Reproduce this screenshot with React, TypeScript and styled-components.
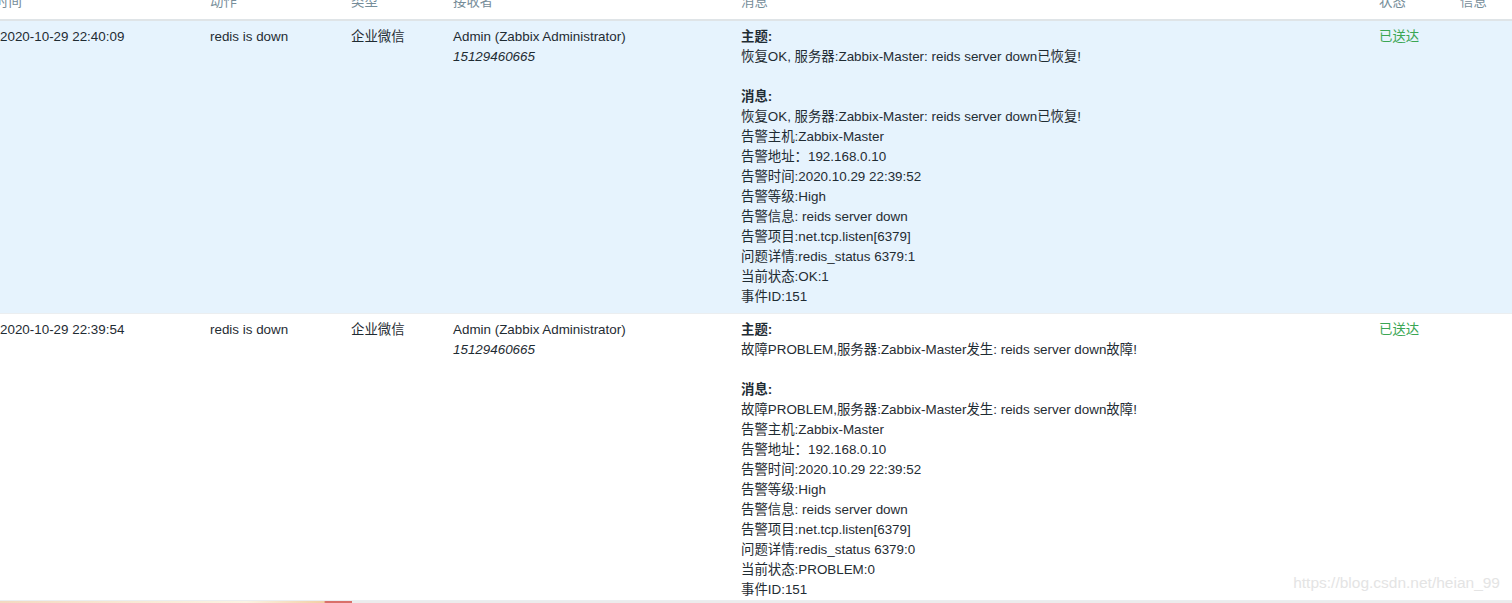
import React from "react";
import styled, { createGlobalStyle } from "styled-components";

const GlobalStyle = createGlobalStyle`
  html, body { margin: 0; padding: 0; background: #ffffff; }
  body {
    font-family: "Liberation Sans", Arial, "Noto Sans CJK SC", sans-serif;
    font-size: 13.4px;
    line-height: 20px;
    color: #1f2c33;
    overflow: hidden;
  }
`;

const Page = styled.div`
  position: relative;
  width: 1512px;
  height: 603px;
  overflow: hidden;
`;

const Table = styled.div`
  margin-top: -13px;
  display: flex;
  flex-direction: column;
`;

const cols = "210px 141px 102px 288px 638px 81px 52px";

const HeadRow = styled.div`
  display: grid;
  grid-template-columns: ${cols};
  border-bottom: 2px solid #dfe4e7;
`;

const HeadCell = styled.div<{ $shift?: number }>`
  padding: 5px 0 7px;
  color: #768d99;
  white-space: nowrap;
  margin-left: ${(p) => p.$shift ?? 0}px;
`;

const Row = styled.div<{ $active?: boolean; $last?: boolean }>`
  display: grid;
  grid-template-columns: ${cols};
  background: ${(p) => (p.$active ? "#e6f3fd" : "#ffffff")};
  border-bottom: 1px solid #ebeef0;
  & > div {
    padding-bottom: ${(p) => (p.$last ? "0px" : "6px")};
  }
`;

const Cell = styled.div`
  padding-top: 6px;
  white-space: nowrap;
  display: flex;
  flex-direction: column;
`;

const Phone = styled.span`
  font-style: italic;
`;

const Label = styled.span`
  font-weight: bold;
`;

const Line = styled.span`
  min-height: 20px;
`;

const Status = styled.span`
  color: #3aa653;
`;

const Strip = styled.div`
  display: flex;
  height: 2px;
`;

const StripImage = styled.div`
  width: 352px;
  background: linear-gradient(90deg, #f3d9c0 0%, #f8ead6 40%, #fbf3e2 70%, #f2cfa6 92%, #d9706a 92.5%, #d9706a 100%);
`;

const StripRest = styled.div`
  flex: 1;
  background: #ececec;
`;

const Watermark = styled.div`
  position: absolute;
  right: 12px;
  top: 573px;
  font-size: 15.5px;
  color: #e4e4e4;
  font-family: "Liberation Sans", Arial, sans-serif;
`;

type Entry = {
  time: string;
  subject: string;
  lines: string[];
  active?: boolean;
};

const entries: Entry[] = [
  {
    time: "2020-10-29 22:40:09",
    subject: "恢复OK, 服务器:Zabbix-Master: reids server down已恢复!",
    active: true,
    lines: [
      "告警主机:Zabbix-Master",
      "告警地址：192.168.0.10",
      "告警时间:2020.10.29 22:39:52",
      "告警等级:High",
      "告警信息: reids server down",
      "告警项目:net.tcp.listen[6379]",
      "问题详情:redis_status 6379:1",
      "当前状态:OK:1",
      "事件ID:151",
    ],
  },
  {
    time: "2020-10-29 22:39:54",
    subject: "故障PROBLEM,服务器:Zabbix-Master发生: reids server down故障!",
    lines: [
      "告警主机:Zabbix-Master",
      "告警地址：192.168.0.10",
      "告警时间:2020.10.29 22:39:52",
      "告警等级:High",
      "告警信息: reids server down",
      "告警项目:net.tcp.listen[6379]",
      "问题详情:redis_status 6379:0",
      "当前状态:PROBLEM:0",
      "事件ID:151",
    ],
  },
];

export default function App() {
  return (
    <Page>
      <GlobalStyle />
      <Table>
        <HeadRow>
          <HeadCell $shift={-5}>时间</HeadCell>
          <HeadCell>动作</HeadCell>
          <HeadCell>类型</HeadCell>
          <HeadCell>接收者</HeadCell>
          <HeadCell>消息</HeadCell>
          <HeadCell>状态</HeadCell>
          <HeadCell>信息</HeadCell>
        </HeadRow>
        {entries.map((e, i) => (
          <Row key={e.time} $active={e.active} $last={i === entries.length - 1}>
            <Cell>{e.time}</Cell>
            <Cell>redis is down</Cell>
            <Cell>企业微信</Cell>
            <Cell>
              <span>Admin (Zabbix Administrator)</span>
              <Phone>15129460665</Phone>
            </Cell>
            <Cell>
              <Label>主题:</Label>
              <Line>{e.subject}</Line>
              <Line />
              <Label>消息:</Label>
              <Line>{e.subject}</Line>
              {e.lines.map((l) => (
                <Line key={l}>{l}</Line>
              ))}
            </Cell>
            <Cell>
              <Status>已送达</Status>
            </Cell>
            <Cell />
          </Row>
        ))}
        <Strip>
          <StripImage />
          <StripRest />
        </Strip>
      </Table>
      <Watermark>https://blog.csdn.net/heian_99</Watermark>
    </Page>
  );
}
